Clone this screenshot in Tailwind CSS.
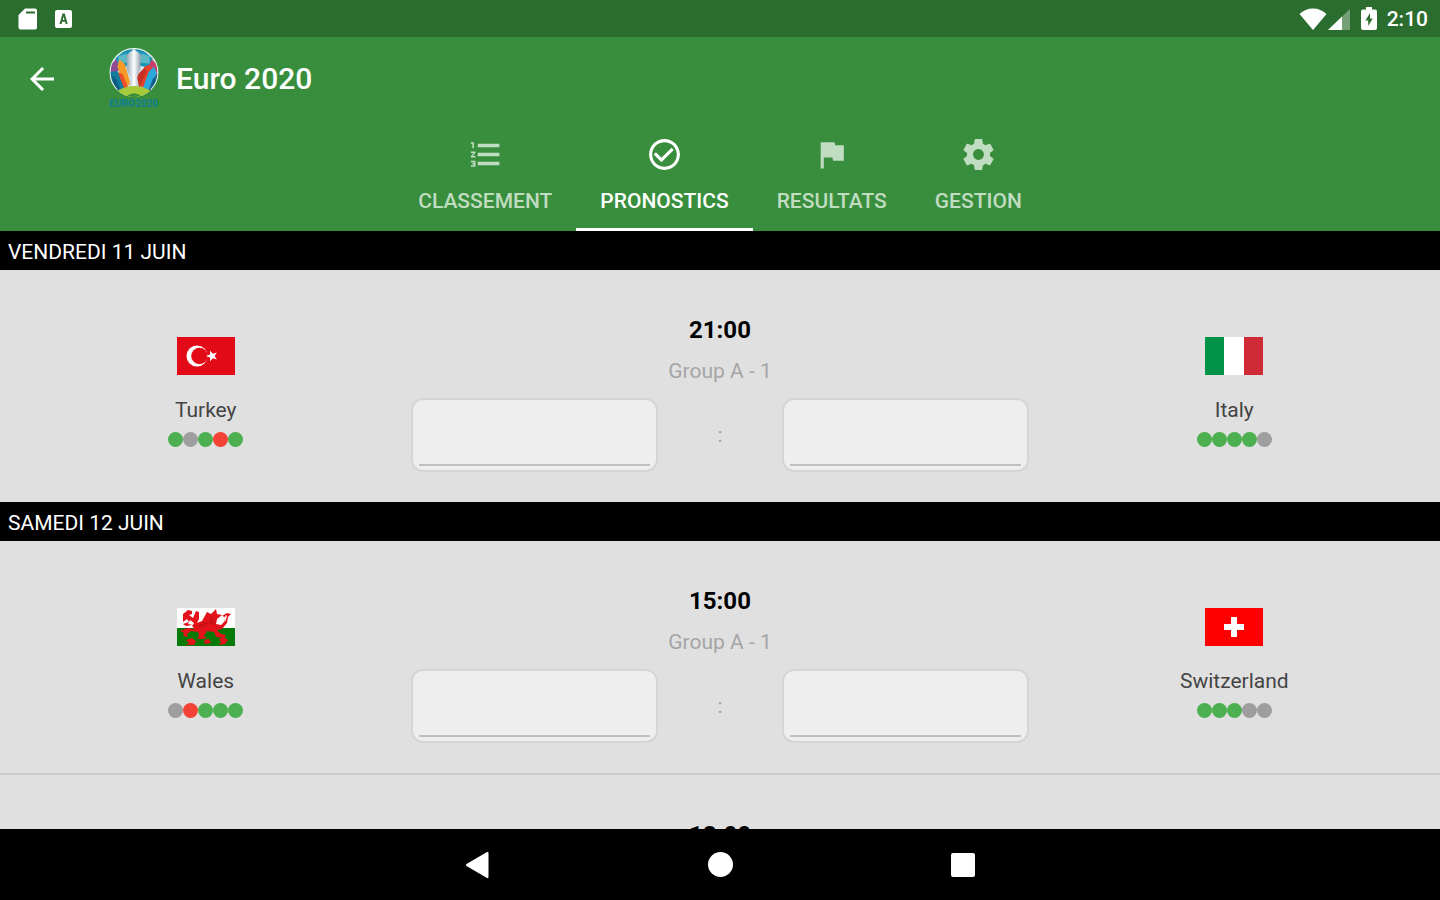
<!DOCTYPE html>
<html lang="fr">
<head>
  <meta charset="UTF-8" />
  <meta name="viewport" content="width=device-width, initial-scale=1.0" />
  <title>Euro 2020 - Pronostics</title>
  <script src="https://cdn.jsdelivr.net/npm/@tailwindcss/browser@4"></script>
</head>
<body class="h-screen flex flex-col overflow-hidden bg-black font-['Roboto',sans-serif]">

  <!-- Status bar -->
  <div class="h-[37px] shrink-0 flex items-center justify-between pl-4 pr-3 bg-[#2b6d2f] text-white">
    <div class="flex items-center gap-3">
      <svg class="w-6 h-6" viewBox="0 0 24 24" fill="currentColor"><path fill-rule="evenodd" d="M9 1.500h10a2 2 0 0 1 2 2v17a2 2 0 0 1-2 2H4.500a2 2 0 0 1-2-2V8z M10 4.500v2h9v-2z" /></svg>
      <svg class="w-6 h-6" viewBox="0 0 24 24" fill="currentColor"><path fill-rule="evenodd" d="M5 3h13a2 2 0 0 1 2 2v14a2 2 0 0 1-2 2H5a2 2 0 0 1-2-2V5a2 2 0 0 1 2-2z M10.500 6.500L7.500 17h2l.6-2.200h3l.6 2.200h2l-3-10.500z M11.600 9.500l.9 3.500h-1.800z" /></svg>
    </div>
    <div class="flex items-center">
      <svg class="w-7 h-6" viewBox="0 0 28 24" fill="currentColor"><path d="M14 23L.5 7C4 3.500 9 1.500 14 1.500S24 3.500 27.500 7z" /></svg>
      <svg class="w-6 h-6" viewBox="0 0 24 24" fill="currentColor"><path opacity=".35" d="M1 23L23 2v21z" /><path d="M1 23L15 9.600V23z" /></svg>
      <svg class="w-6 h-6 mx-1.5" viewBox="0 0 24 24" fill="currentColor"><path fill-rule="evenodd" d="M9 0h6v2.500h3q2 0 2 2V21q0 2-2 2H6q-2 0-2-2V4.500q0-2 2-2h3z M13 6l-4.500 7.500h2.700V19l4.500-7.500H13z" /></svg>
      <span class="text-[21px] leading-6 font-medium">2:10</span>
    </div>
  </div>

  <!-- Header -->
  <header class="shrink-0 bg-[#388e3c] text-white">
    <div class="h-[83px] flex items-center px-6">
      <button type="button" aria-label="Retour">
        <svg class="w-9 h-9" viewBox="0 0 24 24" fill="currentColor"><path d="M20 11H7.830l5.590-5.590L12 4l-8 8 8 8 1.410-1.410L7.830 13H20v-2z" /></svg>
      </button>
      <div class="w-[52px] ml-12 mr-4 flex flex-col items-center">
        <svg class="w-[50px] h-[50px]" viewBox="0 0 48 48">
          <defs>
            <clipPath id="ball"><circle cx="24" cy="24" r="23" /></clipPath>
            <linearGradient id="cup" x1="0" x2="1"><stop offset="0" stop-color="#8fa5b5" /><stop offset=".5" stop-color="#fff" /><stop offset="1" stop-color="#8799a8" /></linearGradient>
          </defs>
          <g clip-path="url(#ball)">
            <rect width="48" height="48" fill="#d4e4ea" />
            <path d="M6 10L18 0h5l-4 17-11 2zM42 10L30 0h-5l4 17 11 2z" fill="#1793b5" />
            <path d="M9 8l8-3 1 9-9 1zM39 8l-8-3-1 9 9 1z" fill="#5ab9c4" />
            <path d="M1 16l6-5 4 9-9 8z" fill="#8e4a92" />
            <path d="M47 16l-6-5-4 9 9 8z" fill="#c83d6c" />
            <path d="M10 11l5 4 6 20-6 2L8 18z" fill="#f59a27" />
            <path d="M8 23l5 2 6 14-6 2z" fill="#ed4e2a" />
            <path d="M1 23l7-1 7 18-6 2-8-13z" fill="#127c9f" />
            <path d="M2 26l5 4 4 11-5-2z" fill="#0e5b80" />
            <path d="M39 16l-5 2-7 18 6 2 8-18z" fill="#e5412b" />
            <path d="M28 25l6-6 2 4-7 15-5-1z" fill="#c73122" />
            <path d="M43 18l-5 5-6 17 5 1 9-17z" fill="#29a9dc" />
            <path d="M47 24l-5 6-5 12 6-1 5-10z" fill="#14608b" />
            <path d="M17 7q7-9 14 0l-1 13q-2 6-3 8l2 10H19l2-10q-4-5-4-10z" fill="url(#cup)" />
            <path d="M8 41q16-9 32 0l-5 7H13z" fill="#a6ca38" />
            <path d="M15 48q9-9 18 0z" fill="#388e3c" />
          </g>
          <path d="M8 40A23 23 0 1 1 40 40" fill="none" stroke="#e8f1ec" stroke-width="1" />
        </svg>
        <span class="text-[10px] leading-[12px] font-black text-[#16808a]">EURO2020</span>
      </div>
      <h1 class="text-[30px] leading-9 font-medium">Euro 2020</h1>
    </div>

    <!-- Tabs -->
    <nav class="h-[111px] flex justify-center text-[21px] leading-6 font-medium text-[#c0dcc1]">
      <a href="#classement" class="flex flex-col items-center px-6 pt-4 gap-4 border-b-[3px] border-transparent">
        <svg class="w-[37px] h-[37px]" viewBox="0 0 24 24" fill="currentColor"><path d="M2.500 17h2v.5h-1v1h1v.5h-2v1h3v-4h-3v1zm1-9h1V4h-2v1h1v3zm-1 3h1.800l-1.800 2.100v.9h3v-1H3.700l1.800-2.100V10h-3v1zM7 5v2.300h14V5zm0 14h14v-2.300H7zm0-5.800h14v-2.300H7z" /></svg>
        CLASSEMENT
      </a>
      <a href="#pronostics" class="flex flex-col items-center px-6 pt-4 gap-4 border-b-[3px] border-white text-white" aria-current="page">
        <svg class="w-[37px] h-[37px]" viewBox="0 0 24 24" fill="currentColor"><path d="M16.590 7.580L10 14.170l-3.590-3.580L5 12l5 5 8-8zM12 2C6.480 2 2 6.480 2 12s4.480 10 10 10 10-4.480 10-10S17.520 2 12 2zm0 18c-4.420 0-8-3.580-8-8s3.580-8 8-8 8 3.580 8 8-3.580 8-8 8z" /></svg>
        PRONOSTICS
      </a>
      <a href="#resultats" class="flex flex-col items-center px-6 pt-4 gap-4 border-b-[3px] border-transparent">
        <svg class="w-[37px] h-[37px]" viewBox="0 0 24 24" fill="currentColor"><path d="M14.400 6L14 4H5v17h2v-7h5.600l.4 2h7V6z" /></svg>
        RESULTATS
      </a>
      <a href="#gestion" class="flex flex-col items-center px-6 pt-4 gap-4 border-b-[3px] border-transparent">
        <svg class="w-[37px] h-[37px]" viewBox="0 0 24 24" fill="currentColor"><path d="M19.430 12.980c.04-.32.07-.64.07-.98s-.03-.66-.07-.98l2.110-1.650c.19-.15.24-.42.12-.64l-2-3.460c-.12-.22-.39-.3-.61-.22l-2.490 1c-.52-.4-1.080-.73-1.690-.98l-.38-2.650C14.460 2.180 14.250 2 14 2h-4c-.25 0-.46.18-.49.42l-.38 2.650c-.61.25-1.170.59-1.690.98l-2.490-1c-.23-.09-.49 0-.61.22l-2 3.460c-.13.22-.07.49.12.64l2.110 1.650c-.04.32-.07.65-.07.98s.03.66.07.98l-2.110 1.650c-.19.15-.24.42-.12.64l2 3.460c.12.22.39.3.61.22l2.490-1c.52.4 1.080.73 1.690.98l.38 2.650c.03.24.24.42.49.42h4c.25 0 .46-.18.49-.42l.38-2.650c.61-.25 1.170-.59 1.690-.98l2.490 1c.23.09.49 0 .61-.22l2-3.460c.12-.22.07-.49-.12-.64l-2.110-1.650zM12 15.500c-1.930 0-3.500-1.570-3.500-3.500s1.570-3.500 3.500-3.500 3.500 1.570 3.500 3.500-1.570 3.500-3.500 3.500z" /></svg>
        GESTION
      </a>
    </nav>
  </header>

  <!-- Matches -->
  <main class="flex-1 min-h-0 overflow-hidden bg-[#e0e0e0] text-[#444444]">
    <h2 class="h-[39px] flex items-center px-2 pt-0.5 bg-black text-[21px] leading-6 text-white">VENDREDI 11 JUIN</h2>
    <article class="h-[232px] grid grid-cols-[2fr_3fr_2fr]">
      <div class="flex flex-col items-center pt-[67px]">
        <svg class="w-[58px] h-[38px]" viewBox="0 0 58 38">
          <rect width="58" height="38" fill="#e30a17" />
          <circle cx="20" cy="19" r="10.500" fill="#fff" /><circle cx="22.500" cy="19" r="8.300" fill="#e30a17" />
          <path d="M29 19l4-1.500V13.500l2.800 3.300 4-1.300-2.200 3.500 2.200 3.500-4-1.300-2.800 3.300v-4z" fill="#fff" />
        </svg>
        <span class="mt-[23px] text-[21px] leading-6">Turkey</span>
        <div class="mt-[10px] flex">
          <span class="w-[15px] h-[15px] rounded-full bg-[#4caf50]"></span>
          <span class="w-[15px] h-[15px] rounded-full bg-[#9e9e9e]"></span>
          <span class="w-[15px] h-[15px] rounded-full bg-[#4caf50]"></span>
          <span class="w-[15px] h-[15px] rounded-full bg-[#f44336]"></span>
          <span class="w-[15px] h-[15px] rounded-full bg-[#4caf50]"></span>
        </div>
      </div>
      <div class="flex flex-col items-center pt-12">
        <time class="text-[24px] leading-6 font-bold text-black">21:00</time>
        <span class="mt-[17px] text-[21px] leading-6 text-[#a5a5a5]">Group A - 1</span>
        <div class="mt-[15px] w-full grid grid-cols-[2fr_1fr_2fr] items-center">
          <div class="h-[74px] flex items-end px-1.5 pb-1 bg-[#eeeeee] border-2 border-[#d5d5d5] rounded-xl">
            <input type="text" inputmode="numeric" aria-label="Score Turkey" class="w-full min-w-0 h-full text-center text-[21px] border-b-2 border-[#c0c0c0] outline-none" />
          </div>
          <span class="text-center text-[21px] leading-6 text-[#a5a5a5]">:</span>
          <div class="h-[74px] flex items-end px-1.5 pb-1 bg-[#eeeeee] border-2 border-[#d5d5d5] rounded-xl">
            <input type="text" inputmode="numeric" aria-label="Score Italy" class="w-full min-w-0 h-full text-center text-[21px] border-b-2 border-[#c0c0c0] outline-none" />
          </div>
        </div>
      </div>
      <div class="flex flex-col items-center pt-[67px]">
        <svg class="w-[58px] h-[38px]" viewBox="0 0 58 38">
          <rect width="58" height="38" fill="#fff" /><rect width="19" height="38" fill="#009246" /><rect x="39" width="19" height="38" fill="#ce2b37" />
        </svg>
        <span class="mt-[23px] text-[21px] leading-6">Italy</span>
        <div class="mt-[10px] flex">
          <span class="w-[15px] h-[15px] rounded-full bg-[#4caf50]"></span>
          <span class="w-[15px] h-[15px] rounded-full bg-[#4caf50]"></span>
          <span class="w-[15px] h-[15px] rounded-full bg-[#4caf50]"></span>
          <span class="w-[15px] h-[15px] rounded-full bg-[#4caf50]"></span>
          <span class="w-[15px] h-[15px] rounded-full bg-[#9e9e9e]"></span>
        </div>
      </div>
    </article>

    <h2 class="h-[39px] flex items-center px-2 pt-0.5 bg-black text-[21px] leading-6 text-white">SAMEDI 12 JUIN</h2>
    <article class="h-[234px] grid grid-cols-[2fr_3fr_2fr] border-b-2 border-[#cdcdcd]">
      <div class="flex flex-col items-center pt-[67px]">
        <svg class="w-[58px] h-[38px]" viewBox="0 0 58 38">
          <rect width="58" height="38" fill="#fff" /><rect y="20" width="58" height="18" fill="#067a08" />
          <g fill="#e3121b">
            <path d="M6 6l5-4 4 1v3l-3 1 4 3 3-7 3 1v7l-2 4 5-2 5-9 4 2 5-5 1 5 5 1-5 4-1 5 5 1 3-3 1-5-3-1 5-3 4 1-3 3-1 6-5 6-5 1 4 4 5 1-2 3-8-1-2-5-7-1-3 5 3 2-5 1h-5l2-3-1-4-7-1-4 3 1 3-5-1 1-3-4-2 7-3 7 1-2-4-6 1-3-2 6-2-2-3-4 3z" />
            <path d="M9 32l6-2 4 3-2 4H9l3-2zM42 31l5-2 4 3-3 4-6 1 2-3zM27 32l5-1 2 4-6 1z" />
          </g>
          <path d="M20 18l8-4 4 1-9 5zM34 7l2 6 4-3-3 7-5-2z" fill="#8e0c0c" opacity=".3" />
          <path d="M13 12l4 3-1 2-5-1zM47 12l2-5 1 1-2 6z" fill="#fff" />
        </svg>
        <span class="mt-[23px] text-[21px] leading-6">Wales</span>
        <div class="mt-[10px] flex">
          <span class="w-[15px] h-[15px] rounded-full bg-[#9e9e9e]"></span>
          <span class="w-[15px] h-[15px] rounded-full bg-[#f44336]"></span>
          <span class="w-[15px] h-[15px] rounded-full bg-[#4caf50]"></span>
          <span class="w-[15px] h-[15px] rounded-full bg-[#4caf50]"></span>
          <span class="w-[15px] h-[15px] rounded-full bg-[#4caf50]"></span>
        </div>
      </div>
      <div class="flex flex-col items-center pt-12">
        <time class="text-[24px] leading-6 font-bold text-black">15:00</time>
        <span class="mt-[17px] text-[21px] leading-6 text-[#a5a5a5]">Group A - 1</span>
        <div class="mt-[15px] w-full grid grid-cols-[2fr_1fr_2fr] items-center">
          <div class="h-[74px] flex items-end px-1.5 pb-1 bg-[#eeeeee] border-2 border-[#d5d5d5] rounded-xl">
            <input type="text" inputmode="numeric" aria-label="Score Wales" class="w-full min-w-0 h-full text-center text-[21px] border-b-2 border-[#c0c0c0] outline-none" />
          </div>
          <span class="text-center text-[21px] leading-6 text-[#a5a5a5]">:</span>
          <div class="h-[74px] flex items-end px-1.5 pb-1 bg-[#eeeeee] border-2 border-[#d5d5d5] rounded-xl">
            <input type="text" inputmode="numeric" aria-label="Score Switzerland" class="w-full min-w-0 h-full text-center text-[21px] border-b-2 border-[#c0c0c0] outline-none" />
          </div>
        </div>
      </div>
      <div class="flex flex-col items-center pt-[67px]">
        <svg class="w-[58px] h-[38px]" viewBox="0 0 58 38">
          <rect width="58" height="38" fill="#ff0000" /><path d="M26 9h6v7h7v6h-7v7h-6v-7h-7v-6h7z" fill="#fff" />
        </svg>
        <span class="mt-[23px] text-[21px] leading-6">Switzerland</span>
        <div class="mt-[10px] flex">
          <span class="w-[15px] h-[15px] rounded-full bg-[#4caf50]"></span>
          <span class="w-[15px] h-[15px] rounded-full bg-[#4caf50]"></span>
          <span class="w-[15px] h-[15px] rounded-full bg-[#4caf50]"></span>
          <span class="w-[15px] h-[15px] rounded-full bg-[#9e9e9e]"></span>
          <span class="w-[15px] h-[15px] rounded-full bg-[#9e9e9e]"></span>
        </div>
      </div>
    </article>

    <article class="flex justify-center pt-12">
      <time class="text-[24px] leading-6 font-bold text-black">18:00</time>
    </article>
  </main>

  <!-- Navigation bar -->
  <footer class="h-[71px] shrink-0 flex justify-center bg-black text-white">
    <button type="button" aria-label="Précédent" class="w-[243px] flex items-center justify-center">
      <svg class="w-6 h-7" viewBox="0 0 24 28" fill="currentColor"><path d="M1.500 13L22 1q1.500-.5 1.500 1v24q0 1.500-1.500 1L1.500 15q-1.500-1 0-2z" /></svg>
    </button>
    <button type="button" aria-label="Accueil" class="w-[243px] flex items-center justify-center">
      <span class="w-[25px] h-[25px] rounded-full bg-white"></span>
    </button>
    <button type="button" aria-label="Applications récentes" class="w-[243px] flex items-center justify-center">
      <span class="w-6 h-6 rounded-xs bg-white"></span>
    </button>
  </footer>
</body>
</html>
